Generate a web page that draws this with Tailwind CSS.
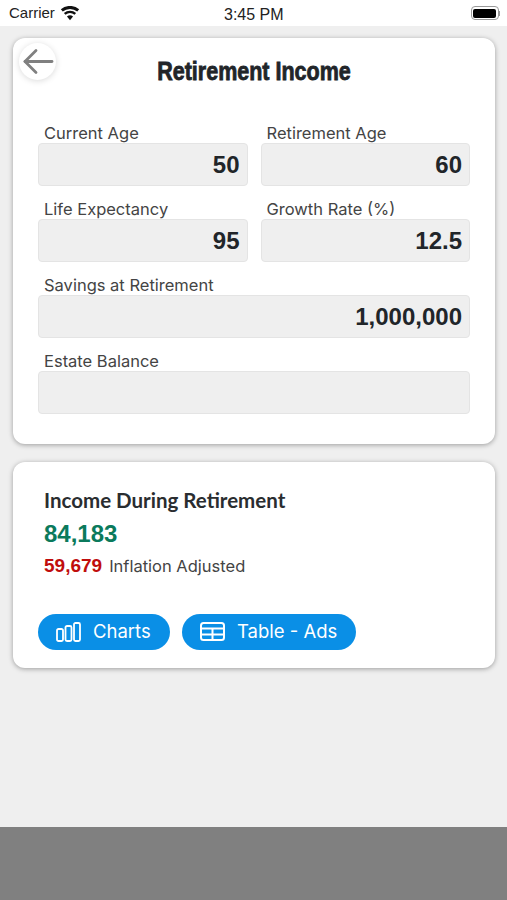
<!DOCTYPE html>
<html lang="en">
<head>
    <meta charset="UTF-8">
    <meta name="viewport" content="width=device-width, initial-scale=1.0">
    <title>Retirement Income</title>
    <script src="https://cdn.jsdelivr.net/npm/@tailwindcss/browser@4"></script>
</head>
<body class="bg-[#efefef] h-[900px] w-[507px] overflow-hidden flex flex-col font-['Inter','Open_Sans',sans-serif] text-[#212529]">
    <!-- status bar -->
    <div class="h-[26px] bg-white flex items-center justify-between pl-[9px] pr-[7px] relative font-['Liberation_Sans',sans-serif] text-[15px] text-[#222]">
        <div class="flex items-center gap-[5px]">
            <span>Carrier</span>
            <svg width="20" height="15" viewBox="0 0 19 14" fill="#111"><path d="M9.5 13.5 L6.6 9.9 A4.6 4.6 0 0 1 12.4 9.9 Z"/><path d="M5.2 8.3 L3.7 6.5 A9 9 0 0 1 15.3 6.5 L13.8 8.3 A6.8 6.8 0 0 0 5.2 8.3 Z"/><path d="M2.6 5.1 L0.8 3 A13.4 13.4 0 0 1 18.2 3 L16.4 5.1 A10.8 10.8 0 0 0 2.6 5.1 Z"/></svg>
        </div>
        <span class="absolute left-[224px] top-[3px] text-[16px]">3:45 PM</span>
        <div class="flex items-center">
            <div class="w-[28px] h-[14px] rounded-[4px] border border-[#999] p-[1.5px]"><div class="bg-black w-full h-full rounded-[2px]"></div></div>
            <div class="w-[1.5px] h-[5px] bg-[#999]"></div>
        </div>
    </div>

    <main class="flex-1 pl-[13px] pr-[12px] pt-3 flex flex-col gap-[18px]">
        <!-- inputs card -->
        <section class="relative bg-white rounded-[12px] h-[406px] px-[25px] pt-[18px] shadow-[0_1px_5px_rgba(0,0,0,0.35)]">
            <button class="absolute left-[6px] top-[5px] w-[37px] h-[37px] rounded-full bg-white shadow-[0_1px_6px_rgba(0,0,0,0.15)] flex items-center justify-center">
                <svg width="32" height="28" viewBox="0 0 32 28" fill="none" stroke="#808080" stroke-width="2.8" stroke-linecap="round" stroke-linejoin="round"><path d="M30 13.5H3"/><path d="M14 2.5 3 13.5 14 24.5"/></svg>
            </button>
            <h1 class="text-center font-['Liberation_Sans',sans-serif] font-bold text-[25px] leading-[30px] scale-x-[0.86] [-webkit-text-stroke:0.8px_#212529]">Retirement Income</h1>

            <div class="grid grid-cols-2 gap-x-[13px] mt-[37px]">
                <div class="h-[76px]">
                    <label class="block pl-[6px] text-[16.5px] leading-[20px] text-[#444]">Current Age</label>
                    <div class="h-[43px] bg-[#efefef] border border-[#e4e4e4] rounded-[4px] flex items-center justify-end pr-[7px] font-['Liberation_Sans',sans-serif] font-bold text-[24px] text-[#212529]">50</div>
                </div>
                <div class="h-[76px]">
                    <label class="block pl-[6px] text-[16.5px] leading-[20px] text-[#444]">Retirement Age</label>
                    <div class="h-[43px] bg-[#efefef] border border-[#e4e4e4] rounded-[4px] flex items-center justify-end pr-[7px] font-['Liberation_Sans',sans-serif] font-bold text-[24px] text-[#212529]">60</div>
                </div>
                <div class="h-[76px]">
                    <label class="block pl-[6px] text-[16.5px] leading-[20px] text-[#444]">Life Expectancy</label>
                    <div class="h-[43px] bg-[#efefef] border border-[#e4e4e4] rounded-[4px] flex items-center justify-end pr-[7px] font-['Liberation_Sans',sans-serif] font-bold text-[24px] text-[#212529]">95</div>
                </div>
                <div class="h-[76px]">
                    <label class="block pl-[6px] text-[16.5px] leading-[20px] text-[#444]">Growth Rate (%)</label>
                    <div class="h-[43px] bg-[#efefef] border border-[#e4e4e4] rounded-[4px] flex items-center justify-end pr-[7px] font-['Liberation_Sans',sans-serif] font-bold text-[24px] text-[#212529]">12.5</div>
                </div>
                <div class="col-span-2 h-[76px]">
                    <label class="block pl-[6px] text-[16.5px] leading-[20px] text-[#444]">Savings at Retirement</label>
                    <div class="h-[43px] bg-[#efefef] border border-[#e4e4e4] rounded-[4px] flex items-center justify-end pr-[7px] font-['Liberation_Sans',sans-serif] font-bold text-[24px] text-[#212529]">1,000,000</div>
                </div>
                <div class="col-span-2 h-[76px]">
                    <label class="block pl-[6px] text-[16.5px] leading-[20px] text-[#444]">Estate Balance</label>
                    <div class="h-[43px] bg-[#efefef] border border-[#e4e4e4] rounded-[4px]"></div>
                </div>
            </div>
        </section>

        <!-- result card -->
        <section class="bg-white rounded-[12px] h-[206px] px-[25px] pt-[26px] shadow-[0_1px_5px_rgba(0,0,0,0.35)]">
            <h2 class="pl-[6px] font-['Lato',sans-serif] font-bold text-[20.5px] leading-[24px] text-[#2a2d30]">Income During Retirement</h2>
            <div class="pl-[6px] mt-[7px] font-['Liberation_Sans',sans-serif] font-bold text-[24px] leading-[30px] text-[#0b7a5c]">84,183</div>
            <div class="pl-[6px] mt-[3px] flex items-baseline gap-[7px]">
                <span class="font-['Liberation_Sans',sans-serif] font-bold text-[19px] text-[#c00d0d]">59,679</span>
                <span class="text-[16.5px] text-[#444]">Inflation Adjusted</span>
            </div>
            <div class="flex gap-3 mt-[33px]">
                <button class="h-[36px] w-[132px] rounded-full bg-[#0a8fe6] text-white flex items-center pl-[18px] gap-[12px] text-[18.5px]">
                    <svg width="25" height="20" viewBox="0 0 25 20" fill="none" stroke="white" stroke-width="1.8"><rect x="1" y="7" width="6" height="12" rx="1.5"/><rect x="9.5" y="4" width="6" height="15" rx="1.5"/><rect x="18" y="1" width="6" height="18" rx="1.5"/></svg>
                    Charts
                </button>
                <button class="h-[36px] w-[174px] rounded-full bg-[#0a8fe6] text-white flex items-center pl-[18px] gap-[12px] text-[18.5px]">
                    <svg width="25" height="19" viewBox="0 0 25 19" fill="none" stroke="white" stroke-width="2"><rect x="1" y="1" width="23" height="17" rx="2.5"/><path d="M1 6.5H24M1 12.5H24M12.5 6.5V18"/></svg>
                    Table - Ads
                </button>
            </div>
        </section>
    </main>

    <!-- ad placeholder -->
    <div class="h-[73px] bg-[#808080]"></div>
</body>
</html>
